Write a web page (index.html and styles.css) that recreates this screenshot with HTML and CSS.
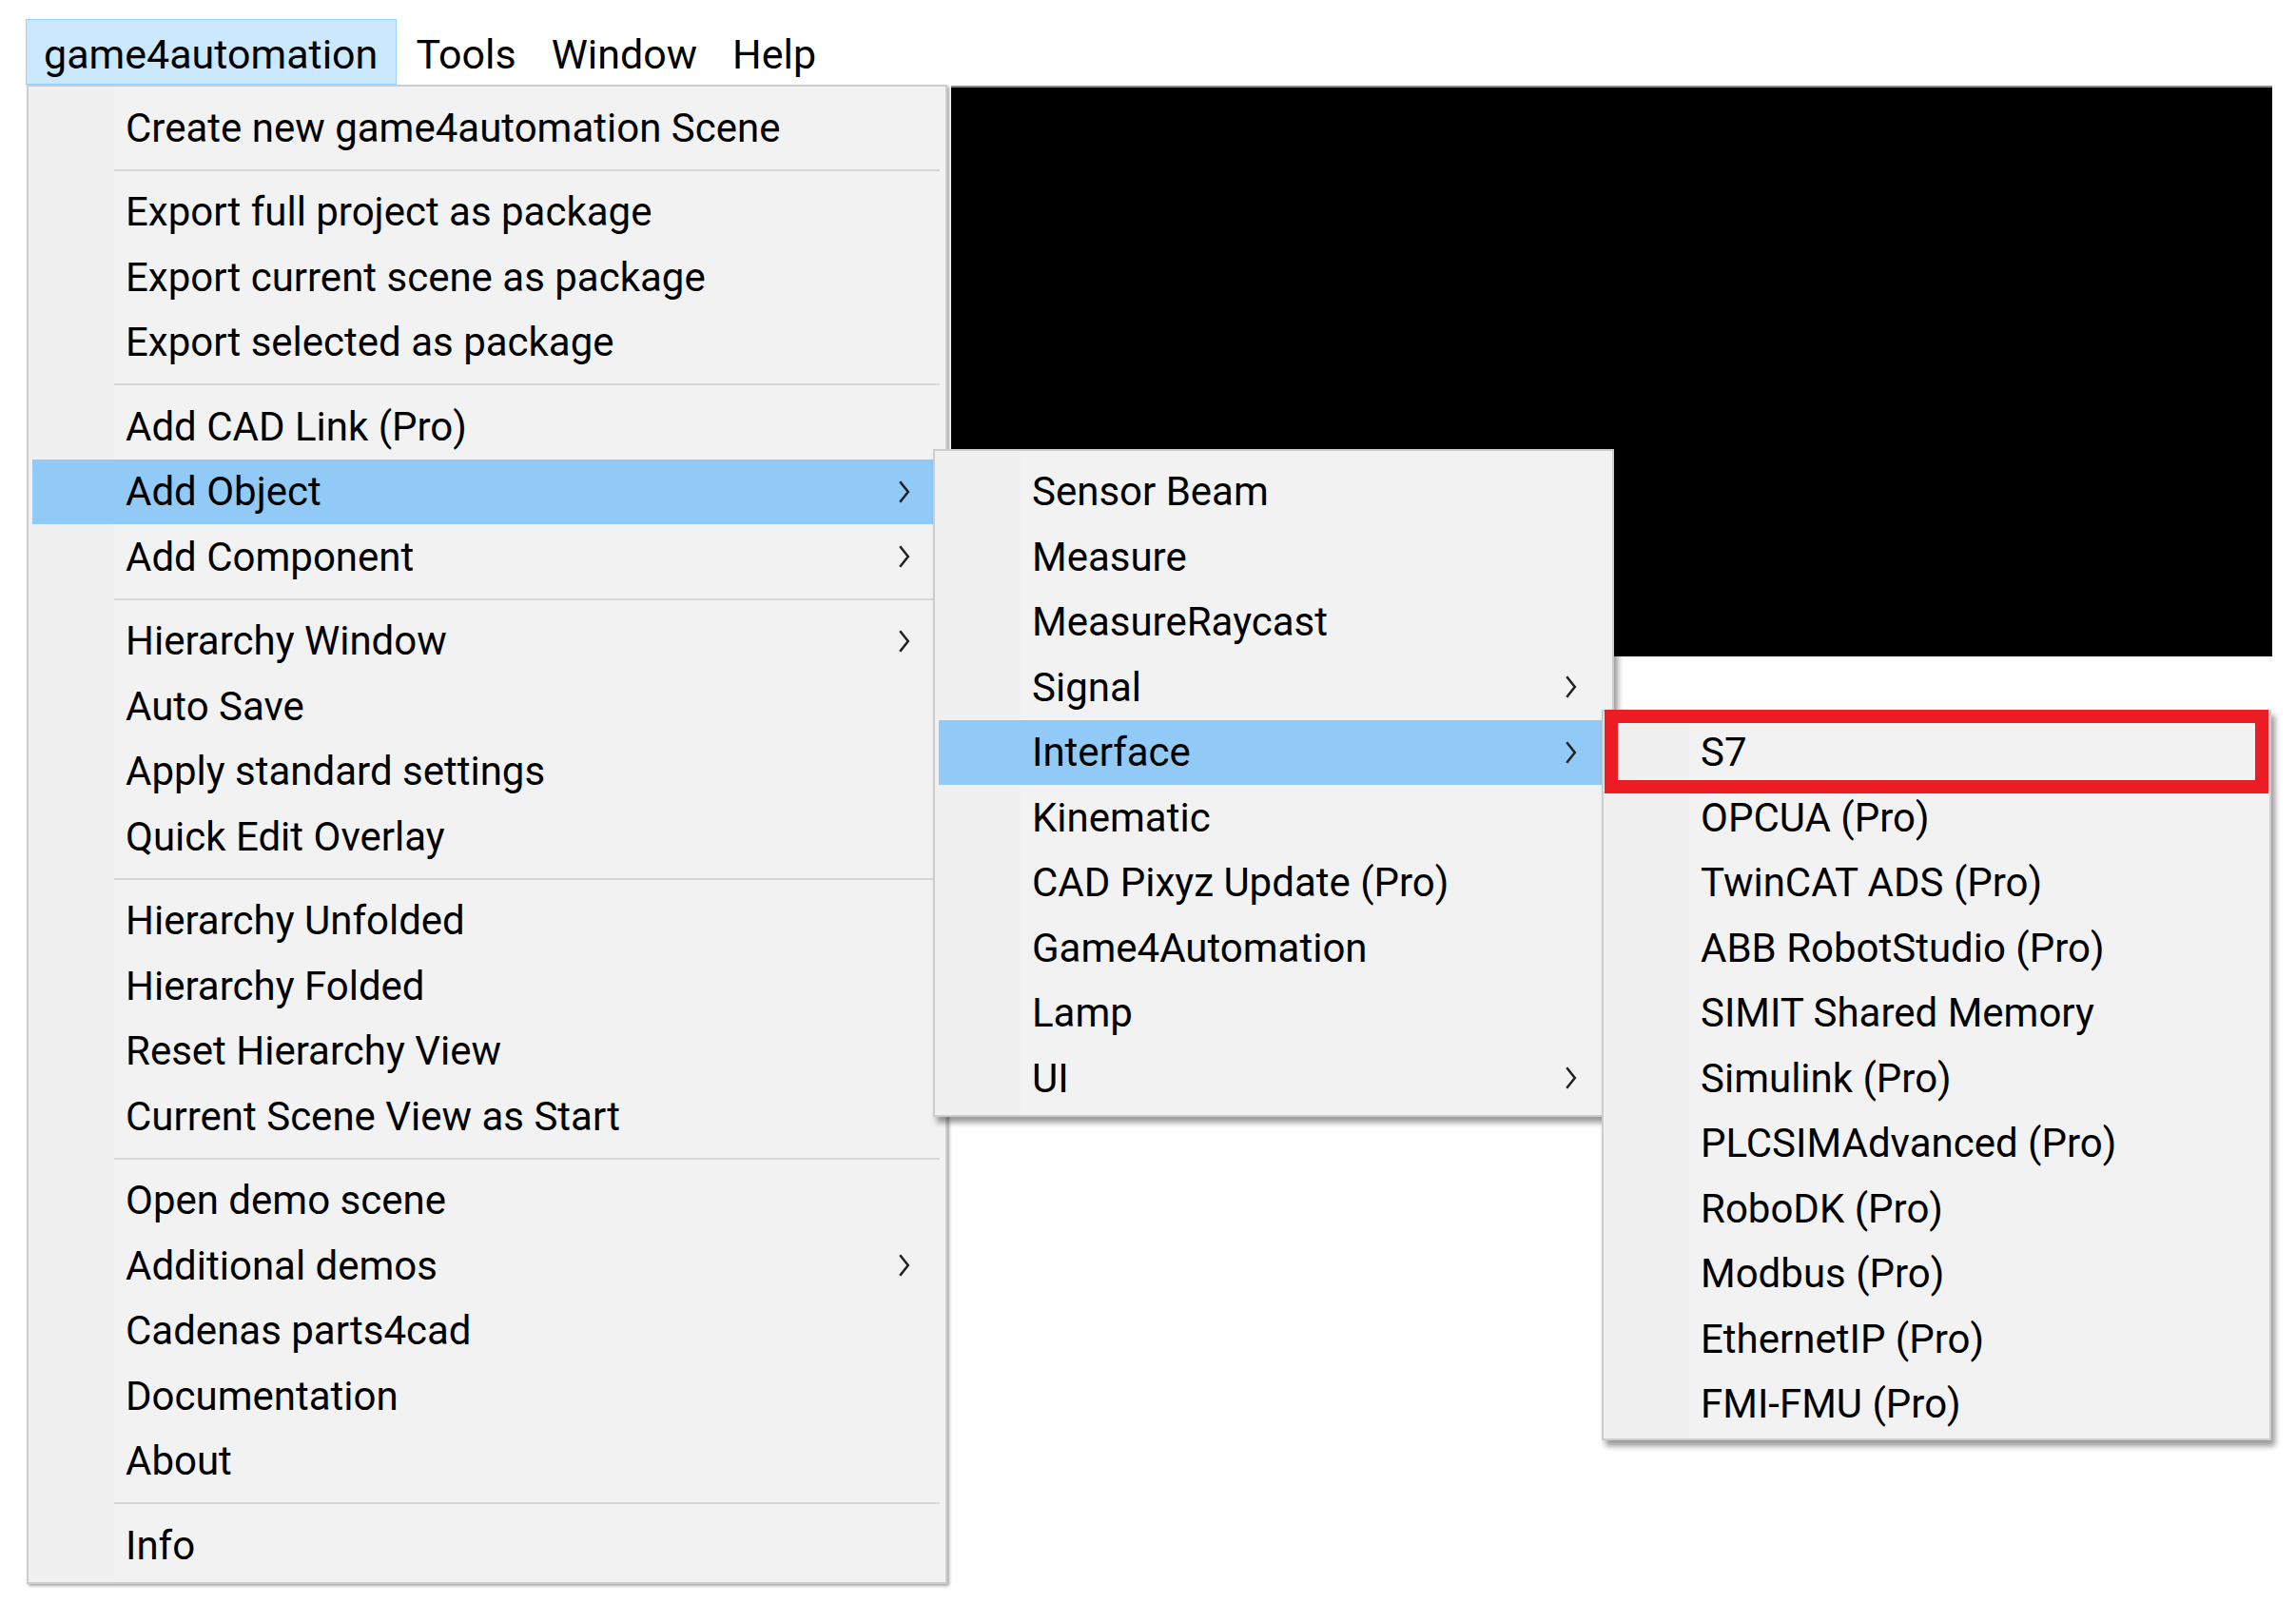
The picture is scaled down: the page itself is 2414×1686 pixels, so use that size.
FILE: index.html
```html
<!DOCTYPE html>
<html lang="en">
<head>
    <meta charset="UTF-8">
    <title>game4automation menu</title>
    <link rel="stylesheet" href="styles.css">
</head>
<body>
    <header class="menubar">
        <div class="menubar-item active">game4automation</div>
        <div class="menubar-item">Tools</div>
        <div class="menubar-item">Window</div>
        <div class="menubar-item">Help</div>
    </header>

    <div class="workspace">
        <!-- main dropdown -->
        <div class="menu main-menu">
            <div class="item">Create new game4automation Scene</div>
            <div class="sep"></div>
            <div class="item">Export full project as package</div>
            <div class="item">Export current scene as package</div>
            <div class="item">Export selected as package</div>
            <div class="sep"></div>
            <div class="item">Add CAD Link (Pro)</div>
            <div class="item has-sub selected">
                Add Object
                <svg class="chevron" viewBox="0 0 14 26"><polyline points="3,3 11,13 3,23"/></svg>

                <!-- Add Object submenu -->
                <div class="menu submenu sub-object">
                    <div class="item">Sensor Beam</div>
                    <div class="item">Measure</div>
                    <div class="item">MeasureRaycast</div>
                    <div class="item has-sub">
                        Signal
                        <svg class="chevron" viewBox="0 0 14 26"><polyline points="3,3 11,13 3,23"/></svg>
                    </div>
                    <div class="item has-sub selected">
                        Interface
                        <svg class="chevron" viewBox="0 0 14 26"><polyline points="3,3 11,13 3,23"/></svg>

                        <!-- Interface submenu -->
                        <div class="menu submenu sub-interface">
                            <div class="mark"></div>
                            <div class="item">S7</div>
                            <div class="item">OPCUA (Pro)</div>
                            <div class="item">TwinCAT ADS (Pro)</div>
                            <div class="item">ABB RobotStudio (Pro)</div>
                            <div class="item">SIMIT Shared Memory</div>
                            <div class="item">Simulink (Pro)</div>
                            <div class="item">PLCSIMAdvanced (Pro)</div>
                            <div class="item">RoboDK (Pro)</div>
                            <div class="item">Modbus (Pro)</div>
                            <div class="item">EthernetIP (Pro)</div>
                            <div class="item">FMI-FMU (Pro)</div>
                        </div>
                    </div>
                    <div class="item">Kinematic</div>
                    <div class="item">CAD Pixyz Update (Pro)</div>
                    <div class="item">Game4Automation</div>
                    <div class="item">Lamp</div>
                    <div class="item has-sub">
                        UI
                        <svg class="chevron" viewBox="0 0 14 26"><polyline points="3,3 11,13 3,23"/></svg>
                    </div>
                </div>
            </div>
            <div class="item has-sub">
                Add Component
                <svg class="chevron" viewBox="0 0 14 26"><polyline points="3,3 11,13 3,23"/></svg>
            </div>
            <div class="sep"></div>
            <div class="item has-sub">
                Hierarchy Window
                <svg class="chevron" viewBox="0 0 14 26"><polyline points="3,3 11,13 3,23"/></svg>
            </div>
            <div class="item">Auto Save</div>
            <div class="item">Apply standard settings</div>
            <div class="item">Quick Edit Overlay</div>
            <div class="sep"></div>
            <div class="item">Hierarchy Unfolded</div>
            <div class="item">Hierarchy Folded</div>
            <div class="item">Reset Hierarchy View</div>
            <div class="item">Current Scene View as Start</div>
            <div class="sep"></div>
            <div class="item">Open demo scene</div>
            <div class="item has-sub">
                Additional demos
                <svg class="chevron" viewBox="0 0 14 26"><polyline points="3,3 11,13 3,23"/></svg>
            </div>
            <div class="item">Cadenas parts4cad</div>
            <div class="item">Documentation</div>
            <div class="item">About</div>
            <div class="sep"></div>
            <div class="item">Info</div>
        </div>

        <!-- scene view behind the menus -->
        <div class="scene"></div>
    </div>
</body>
</html>
```

FILE: styles.css
```css
body {
    margin: 0;
    width: 2414px;
    height: 1686px;
    overflow: hidden;
    background: #fff;
    color: #000;
    font-family: Roboto, "Noto Sans", sans-serif;
    font-size: 42px;
}

/* top menu bar */
.menubar {
    display: flex;
    gap: 3px;
    padding: 20px 0 0 27px;
    font-size: 43px;
}
.menubar-item {
    height: 69px;
    padding: 4px 16px 0 16px;
    display: flex;
    align-items: center;
    box-sizing: border-box;
    border: 1px solid transparent;
}
.menubar-item.active {
    padding: 4px 19px 0 18px;
    background: #cce8ff;
    border-color: #99d1ff;
}

.workspace {
    display: flex;
    align-items: flex-start;
}

/* menus */
.menu {
    box-sizing: border-box;
    border: 2px solid #cdcdcd;
    background: linear-gradient(to right, #f0f0f0 90px, #f2f2f2 90px);
    padding: 9px 0 4px 0;
}
.main-menu {
    position: relative;
    z-index: 2;
    margin-left: 28px;
    width: 968px;
    padding-bottom: 4px;
    box-shadow: 2px 2px 3px rgba(0,0,0,0.35);
}
.submenu {
    position: absolute;
    top: -11px;
    box-shadow: 4px 6px 6px rgba(0,0,0,0.4);
}
.sub-object {
    left: 947px;
    width: 716px;
}
.sub-interface {
    left: 697px;
    width: 704px;
    padding-bottom: 2px;
}

.item {
    position: relative;
    height: 68.5px;
    margin: 0 4px;
    padding: 0 32px 0 98px;
    display: flex;
    align-items: center;
    white-space: nowrap;
}
.item.selected {
    background: #91c9f7;
}
.chevron {
    width: 15px;
    height: 28px;
    margin-left: auto;
    fill: none;
    stroke: #222;
    stroke-width: 2.4;
}

.sep {
    height: 20px;
    display: flex;
    align-items: center;
    margin: 0 6px 0 90px;
}
.sep::after {
    content: "";
    flex: 1;
    height: 2px;
    background: #d7d7d7;
}

/* red annotation frame around S7 */
.mark {
    position: absolute;
    left: 1px;
    top: -2px;
    width: 698px;
    height: 88px;
    box-sizing: border-box;
    border: 14px solid #ec1c24;
}

.scene {
    margin: 1px 0 0 4px;
    width: 1389px;
    height: 600px;
    box-sizing: border-box;
    background: #000;
    border-top: 2px solid #8a8a8a;
}
```
